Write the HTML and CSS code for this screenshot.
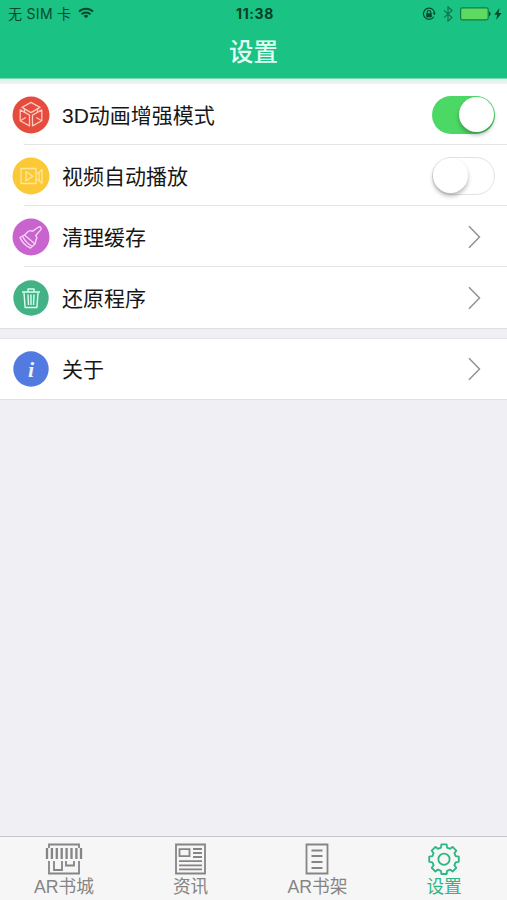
FILE: index.html
```html
<!DOCTYPE html>
<html lang="zh-CN">
<head>
<meta charset="utf-8">
<meta name="viewport" content="width=device-width">
<title>设置</title>
<link rel="stylesheet" href="styles.css">
</head>
<body>
<div class="app">
  <header class="header">
    <div class="status">
      <div class="carrier"><span>无 SIM 卡</span>
        <svg width="16" height="12" viewBox="0 0 16 12" fill="none" stroke="currentColor" stroke-width="2"><path d="M1 4.6a10 10 0 0 1 14 0M3.5 7.3a6.4 6.4 0 0 1 9 0"/><path d="M8 11.3 5.6 9a3.4 3.4 0 0 1 4.8 0z" fill="currentColor" stroke="none"/></svg>
      </div>
      <time class="clock">11:38</time>
      <div class="indicators">
        <svg width="14" height="14" viewBox="0 0 14 14" fill="none" stroke="currentColor" stroke-width="1.2"><path d="M11.8 9.7A5.6 5.6 0 1 1 12.6 6"/><path d="m10.6 5.8 3.2 0-1.5 2.4z" fill="currentColor" stroke="none"/><path d="M5.3 6.8V5.2a1.7 1.7 0 0 1 3.4 0v1.6"/><rect x="4.2" y="6.3" width="5.6" height="4" fill="currentColor" stroke="none"/></svg>
        <svg class="bluetooth" width="10" height="16" viewBox="0 0 10 16" fill="none" stroke="currentColor" stroke-width="1.1"><path d="m1 4.3 8 7.2-4 3.7V.8l4 3.7-8 7.2"/></svg>
        <svg class="battery" width="31" height="14" viewBox="0 0 31 14"><rect x=".6" y=".8" width="27.6" height="12" rx="1.8" fill="#5ddb60" stroke="#117d43" stroke-width="1.2"/><path d="M29 4.5c2 .4 2 4.2 0 4.6z" fill="#06512f"/></svg>
        <svg width="8" height="12" viewBox="0 0 8 12"><path d="M5.5 0 .3 6.8h2.9L2.2 12l5.4-7H4.7z" fill="currentColor"/></svg>
      </div>
    </div>
    <h1>设置</h1>
  </header>
  <main>
    <section class="group">
      <div class="row">
        <svg class="badge" viewBox="0 0 38 38"><circle class="red" cx="19" cy="19" r="18.5"/><g class="cube"><path d="m19 6.4 9 5-9 5.2-9-5.2zM8.2 13.9l9.3 5.2v10.8l-9.3-5.1zM29.8 13.9l-9.3 5.2v10.8l9.3-5.1z"/><path d="M12.5 12v4.3M25.5 12v4.3M8.7 24.5l5-3M29.3 24.5l-5-3"/></g></svg>
        <span class="label">3D动画增强模式</span><i class="switch on"></i>
      </div>
      <div class="row">
        <svg class="badge" viewBox="0 0 38 38"><circle class="yellow" cx="19" cy="19" r="18.5"/><g class="video"><path d="M24 26.5H9v-15h15v15zM24 17l3-1.5v8L24 22M27 15.5l3-3v14l-3-3"/><path d="m14 14.7 7 4.5-7 4.6z"/></g></svg>
        <span class="label">视频自动播放</span><i class="switch"></i>
      </div>
      <div class="row">
        <svg class="badge" viewBox="0 0 38 38"><circle class="purple" cx="19" cy="19" r="18.5"/><g class="brush"><path d="M8 19.5 12.5 17 23 26l-4.5 4C14 28 10 24.500 8 19.500zM12.500 17l4-3.700c1.300-1 2.600-.8 3.800.1l6-4.200c2-1.100 3.700.8 2.400 2.700l-5 5.600c1.300 1.500 1.500 3 .3 4.500L23 26M10.500 18.200c2 4.200 5.600 7.900 9.800 10.200"/></g></svg>
        <span class="label">清理缓存</span>
        <svg class="chevron" viewBox="0 0 13 24"><path d="m1 1.3 10.500 10.700L1 22.700"/></svg>
      </div>
      <div class="row">
        <svg class="badge" viewBox="0 0 38 38"><circle class="green" cx="19" cy="19" r="17.700"/><g class="trash"><path d="M10 13h18M16 12.700V10h6v2.700M12 14l1.100 14.500h11.800L26 14M16 15.500l.5 10.500M19 15.500V26M22 15.500 21.500 26"/></g></svg>
        <span class="label">还原程序</span>
        <svg class="chevron" viewBox="0 0 13 24"><path d="m1 1.300 10.500 10.700L1 22.700"/></svg>
      </div>
    </section>
    <section class="group">
      <div class="row">
        <svg class="badge" viewBox="0 0 38 38"><circle class="blue" cx="19" cy="19" r="17.700"/><text class="info" x="19" y="26.500" text-anchor="middle">i</text></svg>
        <span class="label">关于</span>
        <svg class="chevron" viewBox="0 0 13 24"><path d="m1 1.300 10.500 10.700L1 22.700"/></svg>
      </div>
    </section>
  </main>
  <nav class="tabs">
    <div class="tab">
      <svg width="38" height="33" viewBox="0 0 38 33"><path d="M4 5V1.500h30V5M4 18v12.500h30V18"/><path d="M2 5v11M6.900 5v11M11.800 5v11M16.700 5v11M21.600 5v11M26.500 5v11M31.400 5v11M36 5v11" stroke-width="2.300"/><path d="M9 18v9h8v-9M21 18v4.500h8V18"/></svg>
      <span>AR书城</span>
    </div>
    <div class="tab">
      <svg width="33" height="33" viewBox="0 0 33 33"><path d="M2 1.500h29v29H2zM5.500 6.200h10v7h-10zM19 6h9M19 10h9M19 14h9M5 18.200h23M5 22.300h23M5 26.300h23"/></svg>
      <span>资讯</span>
    </div>
    <div class="tab">
      <svg width="24" height="33" viewBox="0 0 24 33"><path d="M1.500 1.500h21v29h-21zM6.500 7.500h11M6.500 13h11M6.500 19h11M6.500 25h11"/></svg>
      <span>AR书架</span>
    </div>
    <div class="tab active">
      <svg width="34" height="33" viewBox="-17 -16.200 34 33"><path d="M11.600-3.100 14.800-2.600v5.200l-3.200.5L10.400 6l1.900 2.600-3.700 3.700L6 10.400l-2.900 1.200-.5 3.200h-5.200l-.5-3.200L-6 10.400l-2.600 1.900-3.700-3.700 1.900-2.600-1.200-2.900-3.200-.5v-5.200l3.200-.5 1.200-2.900-1.900-2.600 3.700-3.700 2.600 1.900 2.900-1.200.5-3.200h5.200l.5 3.200L6-10.400l2.600-1.900 3.700 3.700L10.400-6z" stroke-linejoin="round"/><circle r="5.600"/></svg>
      <span>设置</span>
    </div>
  </nav>
</div>
</body>
</html>
```
FILE: styles.css
```css
* { box-sizing: border-box; }

body {
  margin: 0;
  font-family: "Liberation Sans", "Noto Sans CJK SC", sans-serif;
  background: #efeff4;
}

.app {
  display: flex;
  flex-direction: column;
  height: 100vh;
}

.header {
  height: 84px;
  background: linear-gradient(#1ac283 0 78px, #79d9b6 78px 79px, #d5faeb 79px 82px, #f7eef0 82px 84px);
}

.status {
  display: grid;
  grid-template-columns: 1fr auto 1fr;
  align-items: center;
  height: 27px;
  padding: 0 5px 0 8px;
  color: #064a2e;
}

.carrier {
  display: flex;
  align-items: center;
  gap: 7px;
  font: 14px/20px Inter, "Noto Sans CJK SC", sans-serif;
  letter-spacing: .3px;
}

.carrier svg { margin-bottom: 2px; }

.clock {
  font: 700 14px/20px Inter, sans-serif;
  letter-spacing: .6px;
  color: #063e27;
}

.indicators {
  display: flex;
  align-items: center;
  justify-content: flex-end;
}

.indicators svg:first-child { margin-right: 1px; }

.bluetooth {
  margin: 0 7px 0 6px;
  opacity: .65;
}

.battery { margin-right: 3px; }

h1 {
  margin: 9px 0 0;
  font-size: 24.5px;
  line-height: 34px;
  font-weight: 500;
  text-align: center;
  color: #e2fff3;
}

main { flex: 1; }

.group {
  margin-bottom: 10px;
  background: #fff;
  border-bottom: 1px solid #dfdfe3;
}

.group + .group {
  margin-top: -1px;
  border-top: 1px solid #e6e6ea;
}

.row {
  display: flex;
  align-items: center;
  height: 61px;
  padding: 0 12px;
  background: linear-gradient(#e4e4e6, #e4e4e6) 24px 100% / 100% 1px no-repeat;
}

.row:last-child { background: none; }

.group + .group .row { height: 60px; }

.badge {
  width: 38px;
  height: 38px;
}

.badge g {
  fill: none;
  stroke-linejoin: round;
}

.red { fill: #e54c3d; }
.yellow { fill: #fbc935; }
.purple { fill: #c964ce; }
.green { fill: #43b385; }
.blue { fill: #527ae0; }
.cube { stroke: #ffc9c0; stroke-width: 1.3; }
.video { stroke: #ffe79b; stroke-width: 1.3; }
.brush { stroke: #f8d2fb; stroke-width: 1.4; }
.trash { stroke: #d9fff0; stroke-width: 1.4; }

.info {
  font: italic 700 22px "Liberation Serif", serif;
  fill: #eef4ff;
}

.label {
  flex: 1;
  margin-left: 12px;
  padding-top: 2px;
  font-size: 21px;
  line-height: 30px;
  color: #161616;
}

.switch {
  display: flex;
  width: 63px;
  height: 38px;
  padding: 1px;
  border: 1.5px solid #e2e2e2;
  border-radius: 19px;
}

.switch::before {
  content: "";
  width: 35px;
  height: 35px;
  border-radius: 50%;
  background: #fff;
  box-shadow: 0 3px 4px rgba(0, 0, 0, .28);
}

.switch:not(.on) { padding: 0; }

.switch.on {
  justify-content: flex-end;
  border: 0;
  background: #4cd864;
}

.chevron {
  width: 13px;
  height: 24px;
  margin-right: 14px;
  fill: none;
  stroke: #929292;
  stroke-width: 1.5;
}

.tabs {
  display: grid;
  grid-template-columns: repeat(4, 1fr);
  height: 64px;
  border-top: 1px solid #c6c6ca;
  background: #f6f6f6;
}

.tab {
  display: flex;
  flex-direction: column;
  align-items: center;
  padding: 6px 0 0 1px;
  color: #858585;
  font-size: 17.7px;
  line-height: 22px;
}

.tab svg {
  fill: none;
  stroke: currentColor;
  stroke-width: 1.8;
}

.tab.active { color: #2bb783; }
```
